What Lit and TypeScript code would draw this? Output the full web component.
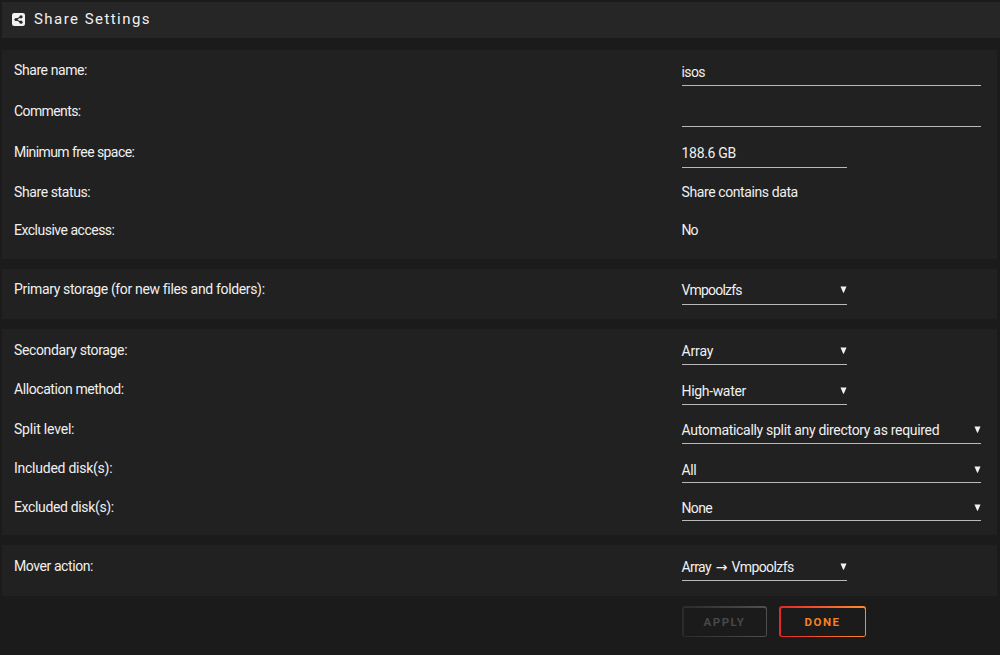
import { LitElement, html, css, svg, nothing } from "lit";
import { customElement, property } from "lit/decorators.js";

type Kind = "input" | "select" | "text";
interface Row {
  label: string;
  value: string;
  kind: Kind;
  wide?: boolean;
  height: number;
  lift: number;
  line: number;
  track: [number, number];
}

const groups: { height: number; top: number; rows: Row[] }[] = [
  {
    height: 209,
    top: 10,
    rows: [
      { label: "Share name:", value: "isos", kind: "input", wide: true, height: 41, lift: 2, line: 26, track: [-0.41, -0.6] },
      { label: "Comments:", value: "", kind: "input", wide: true, height: 41, lift: 1, line: 26, track: [-0.6, 0] },
      { label: "Minimum free space:", value: "188.6 GB", kind: "input", height: 40, lift: 1, line: 26, track: [-0.57, -0.3] },
      { label: "Share status:", value: "Share contains data", kind: "text", height: 38, lift: 0, line: 20, track: [-0.4, -0.4] },
      { label: "Exclusive access:", value: "No", kind: "text", height: 38, lift: 0, line: 20, track: [-0.5, -0.9] },
    ],
  },
  {
    height: 50,
    top: 10,
    rows: [{ label: "Primary storage (for new files and folders):", value: "Vmpoolzfs", kind: "select", height: 39, lift: 1, line: 26, track: [-0.34, -0.82] }],
  },
  {
    height: 206,
    top: 11,
    rows: [
      { label: "Secondary storage:", value: "Array", kind: "select", height: 39, lift: 1, line: 25, track: [-0.36, -0.15] },
      { label: "Allocation method:", value: "High-water", kind: "select", height: 40, lift: 2, line: 26, track: [-0.42, -0.33] },
      { label: "Split level:", value: "Automatically split any directory as required", kind: "select", wide: true, height: 39, lift: 1, line: 25, track: [-0.2, -0.31] },
      { label: "Included disk(s):", value: "All", kind: "select", wide: true, height: 39, lift: 2, line: 25, track: [-0.25, -0.35] },
      { label: "Excluded disk(s):", value: "None", kind: "select", wide: true, height: 37, lift: 1, line: 24, track: [-0.35, -0.65] },
    ],
  },
  {
    height: 51,
    top: 11,
    rows: [{ label: "Mover action:", value: "Array → Vmpoolzfs", kind: "select", height: 39, lift: 1, line: 25, track: [-0.42, -0.6] }],
  },
];

@customElement("setting-row")
class SettingRow extends LitElement {
  @property({ attribute: false }) row!: Row;

  static styles = css`
    :host { display: grid; grid-template-columns: 667.5px 1fr; align-items: start; }
    .label { line-height: 20px; white-space: nowrap; }
    .field { box-sizing: border-box; display: flex; justify-content: space-between; width: 165.5px; line-height: 20px; white-space: nowrap; }
    .field.wide { width: 299.5px; }
    .field.lined { border-bottom: 1px solid #b8b8b8; }
    .flow { word-spacing: 1.8px; }
    .arrow { display: block; width: 7px; height: 7px; margin-top: 6px; fill: #f2f2f2; }
  `;

  render() {
    const { label, value, kind, wide, lift, line, track } = this.row;
    return html`
      <div class="label" style="letter-spacing:${track[0]}px">${label}</div>
      <div class="field ${wide ? "wide" : ""} ${kind === "text" ? "" : "lined"}"
        style="height:${line}px;padding-top:${lift}px">
        <span class=${value.includes("→") ? "flow" : ""} style="letter-spacing:${track[1]}px">${value}</span>
        ${kind === "select" ? html`<svg class="arrow" viewBox="0 0 7 7">${svg`<path d="M0.5 0.5H6.5L3.8 6.7H3.2Z"/>`}</svg>` : nothing}
      </div>`;
  }
}

@customElement("app-root")
class AppRoot extends LitElement {
  static styles = css`
    :host { display: block; box-sizing: border-box; height: 655px; padding: 2px 0 0 2px; background: #1b1b1b; color: #f0f0f0; font: 14px Roboto, "DejaVu Sans", sans-serif; overflow: hidden; }
    .title { display: flex; align-items: center; box-sizing: border-box; height: 36px; padding: 0 0 2px 10px; margin-bottom: 12px; background: #262626; font-size: 15px; letter-spacing: 1.45px; }
    .title svg { width: 13px; height: 13px; margin-right: 9px; }
    .panel { box-sizing: border-box; padding-left: 12px; margin: 0 3px 10px 0; background: #212121; }
    .actions { display: flex; gap: 12px; padding-left: 680px; }
    .button { box-sizing: border-box; width: 85px; height: 31px; padding: 1.5px; border-radius: 3px; font-size: 11.5px; font-weight: 700; line-height: 28px; letter-spacing: 1.5px; text-align: center; color: #484848; background: linear-gradient(#1b1b1b, #1b1b1b) content-box, linear-gradient(90deg, #2b2b2b, #505050) border-box; }
    .done { width: 87px; color: #f58220; background: linear-gradient(#1b1b1b, #1b1b1b) content-box, linear-gradient(90deg, #e22828, #ff8c2f) border-box; }
  `;

  render() {
    return html`
      <div class="title">
        <svg viewBox="0 0 13 13">
          <rect width="13" height="13" rx="2.2" fill="#f2f2f2" />
          <path d="M9 3.8L4 6.5L9 9.2" fill="none" stroke="#262626" stroke-width="1.1" />
          <g fill="#262626"><circle cx="9" cy="3.8" r="1.6" /><circle cx="4" cy="6.5" r="1.6" /><circle cx="9" cy="9.2" r="1.6" /></g>
        </svg>
        <span>Share Settings</span>
      </div>
      ${groups.map(
        (g) => html`<section class="panel" style="height:${g.height}px;padding-top:${g.top}px">
          ${g.rows.map((r) => html`<setting-row .row=${r} style="height:${r.height}px"></setting-row>`)}
        </section>`
      )}
      <div class="actions">
        <div class="button">APPLY</div>
        <div class="button done">DONE</div>
      </div>`;
  }
}
